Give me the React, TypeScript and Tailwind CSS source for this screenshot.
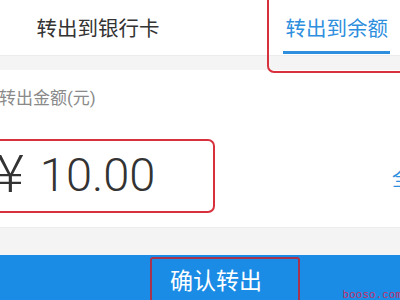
import React from "react";

const cjk = { fontFamily: 'Roboto, "Noto Sans CJK SC", sans-serif' };

const App: React.FC = () => {
  return (
    <div className="w-[400px] h-[300px] overflow-hidden bg-[#f4f4f4] flex flex-col" style={cjk}>
      {/* Tabs */}
      <div className="relative h-[56px] bg-white border-b border-[#ececec] flex shrink-0">
        <div className="w-[200px] flex items-center justify-center pt-[4px]">
          <span className="text-[20.5px] text-[#333] ml-[-4px]">转出到银行卡</span>
        </div>
        <div className="relative flex-1 flex items-center justify-end pr-[12px] pt-[4px]">
          <span className="text-[20.5px] text-[#2e8fde]">转出到余额</span>
          <div className="absolute left-[83px] right-[10px] top-[51px] h-[3px] bg-[#2e8fde]" />
        </div>
        <div className="absolute left-[267px] top-[-10px] w-[150px] h-[83px] border-2 border-[#d9303e] rounded-[7px]" />
      </div>

      {/* Amount */}
      <div className="mt-[14px] h-[158px] bg-white border-b border-[#ececec] flex flex-col shrink-0">
        <div className="mt-[16px] text-[17px] text-[#8a8a8a] leading-[24px] ml-[-1px]">转出金额(元)</div>
        <div className="relative mt-[29px] flex items-center h-[74px]">
          <div className="absolute left-[-10px] top-0 w-[225px] h-[74px] border-2 border-[#d9303e] rounded-[7px]" />
          <span className="text-[52px] font-light text-[#333] leading-none ml-[-3px] mt-[-2px]">¥</span>
          <span className="text-[47px] font-light text-[#333] leading-none ml-[16px] mt-[-4px]">10.00</span>
          <span className="ml-auto mr-[-12px] mt-[6px] text-[20px] text-[#2e8fde]">全</span>
        </div>
      </div>

      {/* Button */}
      <div className="mt-[27px] relative flex-1 bg-[#1a8ce6] flex justify-center">
        <div className="relative w-[150px] h-[50px] mt-[2px] ml-[50px] border-2 border-[#a8334f] rounded-[3px] flex items-start pl-[18px] pt-[9px]">
          <span className="text-[23px] text-white leading-[28px]">确认转出</span>
        </div>
        <span
          className="absolute right-[-2px] bottom-[6px] text-[11px] text-[#c2306a] leading-none"
          style={{ fontFamily: '"Liberation Mono", monospace' }}
        >
          booso.com
        </span>
      </div>
    </div>
  );
};

export default App;
